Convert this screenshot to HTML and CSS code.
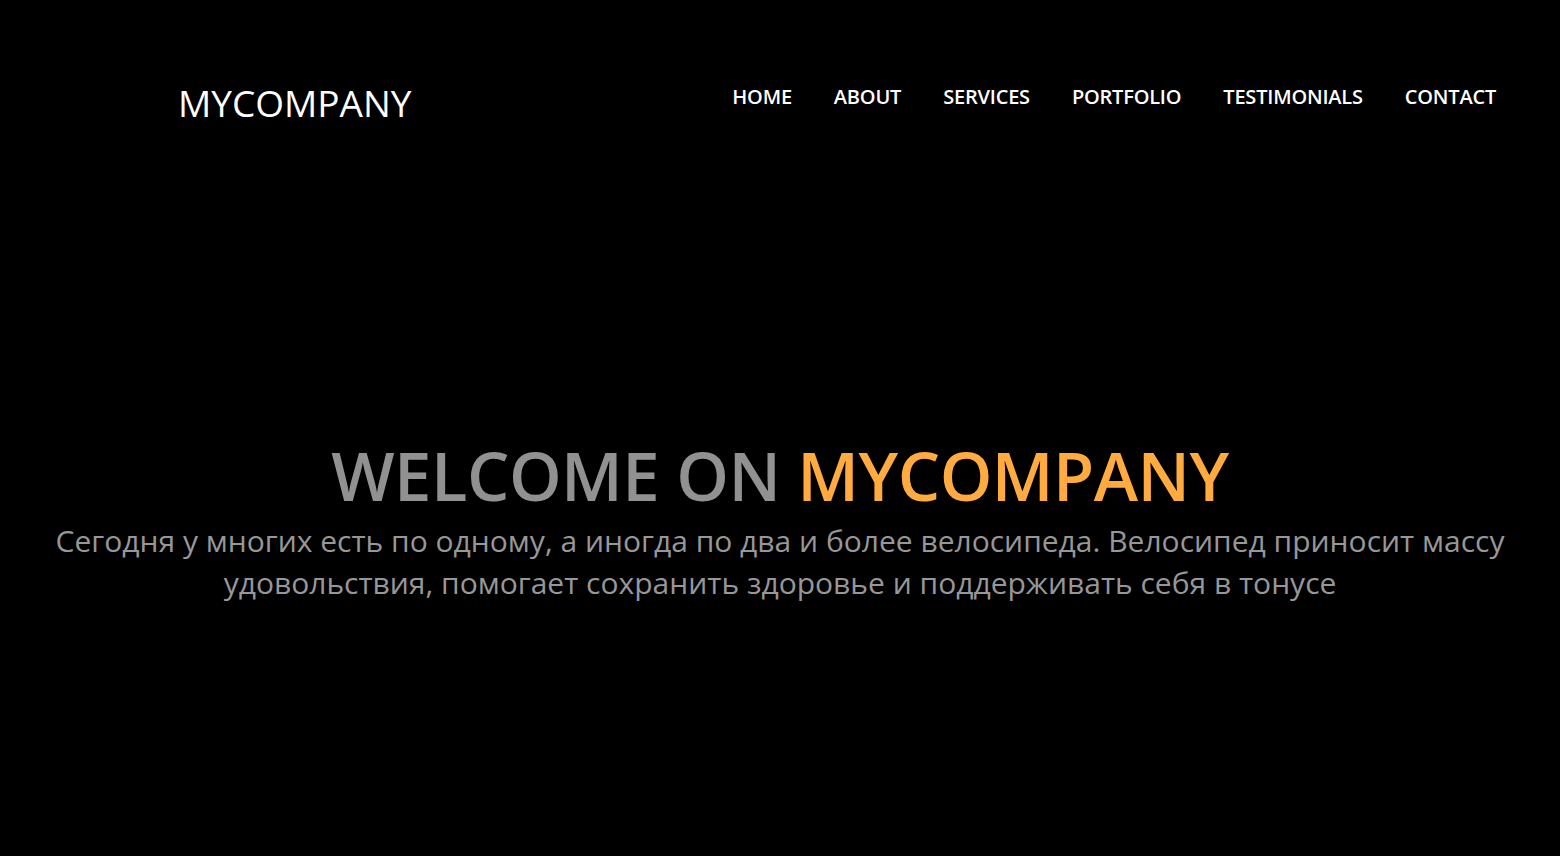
FILE: index.html
```html
<!DOCTYPE html>
<html lang="ru">
<head>
<meta charset="utf-8">
<title>MyCompany</title>
<link rel="stylesheet" href="styles.css">
</head>
<body>
<div class="page">
  <header class="header">
    <div class="logo">MYCOMPANY</div>
    <nav class="nav">
      <a href="#">HOME</a>
      <a href="#">ABOUT</a>
      <a href="#">SERVICES</a>
      <a href="#">PORTFOLIO</a>
      <a href="#">TESTIMONIALS</a>
      <a href="#">CONTACT</a>
    </nav>
  </header>
  <section class="hero">
    <h1 class="title">WELCOME ON <span class="accent">MYCOMPANY</span></h1>
    <p class="lead">Сегодня у многих есть по одному, а иногда по два и более велосипеда. Велосипед приносит массу удовольствия, помогает сохранить здоровье и поддерживать себя в тонусе</p>
  </section>
</div>
</body>
</html>
```
FILE: styles.css
```css
html, body {
  margin: 0;
  padding: 0;
  background: #000;
  font-family: "Open Sans", "Noto Sans", sans-serif;
}
.page {
  width: 1560px;
  height: 856px;
  display: flex;
  flex-direction: column;
}
.header {
  display: flex;
  justify-content: space-between;
  align-items: flex-start;
  padding: 78px 64px 0 178px;
}
.logo {
  color: #fff;
  font-size: 37px;
  line-height: 50px;
  font-weight: 400;
}
.nav {
  display: flex;
  gap: 42px;
  padding-top: 6px;
}
.nav a {
  color: #fff;
  text-decoration: none;
  font-size: 20px;
  font-weight: 600;
  letter-spacing: -0.2px;
  line-height: 26px;
}
.hero {
  text-align: center;
  padding-top: 307px;
}
.title {
  margin: 0;
  font-size: 67px;
  font-weight: 600;
  letter-spacing: -0.5px;
  line-height: 80px;
  color: #919191;
}
.accent {
  color: #ffab40;
}
.lead {
  margin: 0 auto;
  padding-top: 5px;
  width: 1480px;
  font-size: 30px;
  line-height: 42px;
  color: #979797;
}
```
